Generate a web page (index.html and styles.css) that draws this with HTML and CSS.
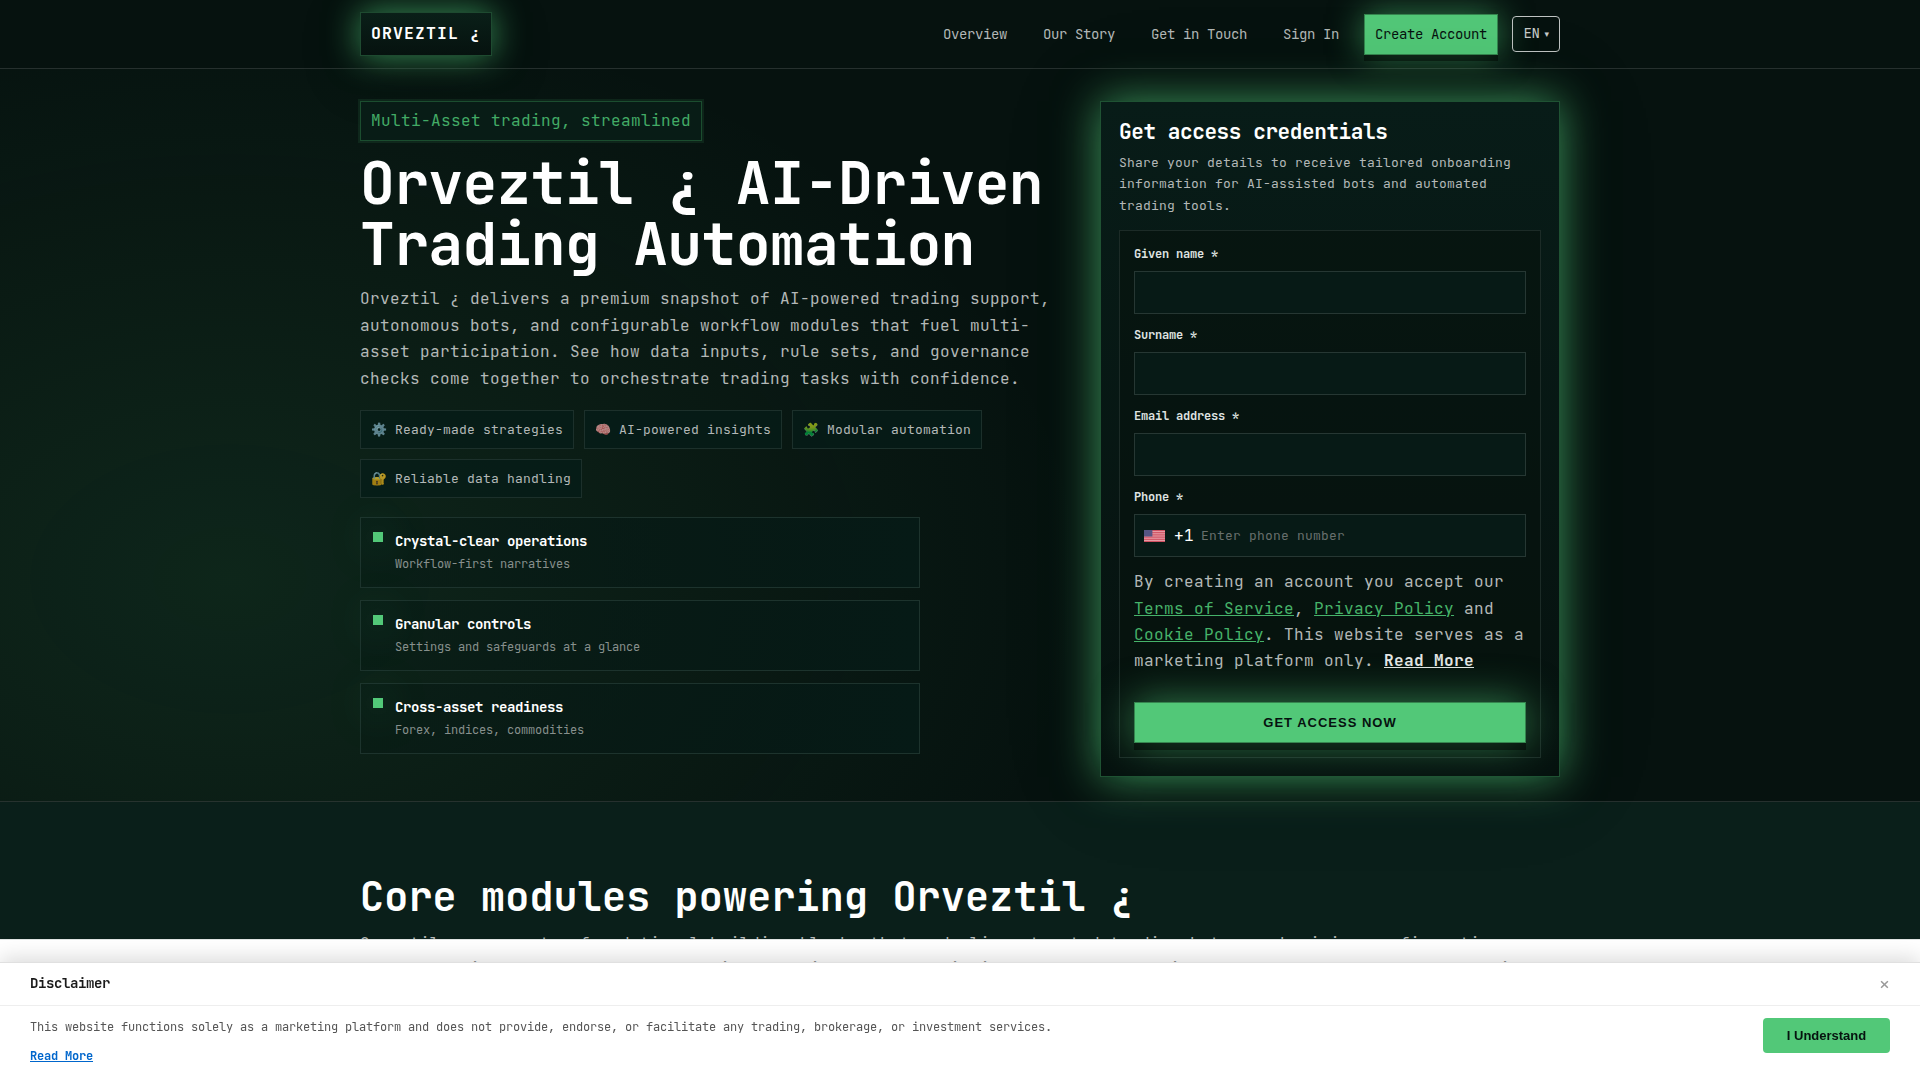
FILE: index.html
```html
<!DOCTYPE html>
<html lang="en">
<head>
    <meta charset="UTF-8">
    <title>Orveztil ¿</title>
    <link rel="stylesheet" href="styles.css">
</head>
<body>
    <header class="header">
        <div class="container header-inner">
            <a class="logo">ORVEZTIL ¿</a>
            <nav class="nav">
                <a>Overview</a>
                <a>Our Story</a>
                <a>Get in Touch</a>
                <a>Sign In</a>
            </nav>
            <a class="btn-create">Create Account</a>
            <div class="lang">EN <span>▾</span></div>
        </div>
    </header>

    <section class="hero">
        <div class="container hero-inner">
            <div class="hero-text">
                <div class="badge">Multi-Asset trading, streamlined</div>
                <h1>Orveztil ¿ AI-Driven<br>Trading Automation</h1>
                <p class="lead">Orveztil ¿ delivers a premium snapshot of AI-powered trading support,<br>autonomous bots, and configurable workflow modules that fuel multi-<br>asset participation. See how data inputs, rule sets, and governance<br>checks come together to orchestrate trading tasks with confidence.</p>
                <ul class="chips">
                    <li><i>⚙️</i>Ready-made strategies</li>
                    <li><i>🧠</i>AI-powered insights</li>
                    <li><i>🧩</i>Modular automation</li>
                    <li><i>🔐</i>Reliable data handling</li>
                </ul>
                <div class="features">
                    <div class="feature">
                        <span class="dot"></span>
                        <div>
                            <strong>Crystal-clear operations</strong>
                            <small>Workflow-first narratives</small>
                        </div>
                    </div>
                    <div class="feature">
                        <span class="dot"></span>
                        <div>
                            <strong>Granular controls</strong>
                            <small>Settings and safeguards at a glance</small>
                        </div>
                    </div>
                    <div class="feature">
                        <span class="dot"></span>
                        <div>
                            <strong>Cross-asset readiness</strong>
                            <small>Forex, indices, commodities</small>
                        </div>
                    </div>
                </div>
            </div>

            <div class="card">
                <h3>Get access credentials</h3>
                <p class="card-sub">Share your details to receive tailored onboarding<br>information for AI-assisted bots and automated<br>trading tools.</p>
                <form class="form">
                    <label>Given name *</label>
                    <div class="field"></div>
                    <label>Surname *</label>
                    <div class="field"></div>
                    <label>Email address *</label>
                    <div class="field"></div>
                    <label>Phone *</label>
                    <div class="field phone">
                        <svg class="flag" width="21" height="12" viewBox="0 0 20 12" preserveAspectRatio="none">
                            <rect width="20" height="12" fill="#e9a3ab"/>
                            <path d="M0 .5h20M0 2.4h20M0 4.2h20M0 6h20M0 7.8h20M0 9.6h20M0 11.5h20" stroke="#cd4a5b" stroke-width=".9"/>
                            <rect width="8" height="6.5" fill="#565583"/>
                        </svg>
                        <span class="code">+1</span>
                        <span class="placeholder">Enter phone number</span>
                    </div>
                    <p class="terms">By creating an account you accept our<br><a>Terms of Service</a>, <a>Privacy Policy</a> and<br><a>Cookie Policy</a>. This website serves as a<br>marketing platform only. <b>Read More</b></p>
                    <button type="button" class="btn-submit">GET ACCESS NOW</button>
                </form>
            </div>
        </div>
    </section>

    <section class="modules">
        <div class="container">
            <h2>Core modules powering Orveztil ¿</h2>
            <p>Orveztil ¿ aggregates foundational building blocks that underlie automated trading bots, emphasizing configuration</p>
        </div>
    </section>

    <div class="bottom">
        <div class="strip">
            <p class="container">controls, risk rules, and the operation of this secured audit in every account trigger across all supported operation.</p>
        </div>
        <div class="disclaimer">
            <div class="disclaimer-head">
                <strong>Disclaimer</strong>
                <span class="close">×</span>
            </div>
            <div class="disclaimer-body">
                <div>
                    <p>This website functions solely as a marketing platform and does not provide, endorse, or facilitate any trading, brokerage, or investment services.</p>
                    <a>Read More</a>
                </div>
                <button type="button">I Understand</button>
            </div>
        </div>
    </div>
</body>
</html>
```

FILE: styles.css
```css
* {
    box-sizing: border-box;
    margin: 0;
    padding: 0;
}
body {
    height: 1080px;
    overflow: hidden;
    background: #06120f;
    color: #b3b8b7;
    font-family: "JetBrains Mono", "DejaVu Sans Mono", "Liberation Mono", monospace;
    font-size: 16px;
    line-height: 1.65;
    letter-spacing: 0.4px;
}
.container {
    width: 1200px;
    margin: 0 auto;
}
.header {
    height: 69px;
    border-bottom: 1px solid rgba(255,255,255,0.13);
}
.header-inner {
    display: flex;
    align-items: center;
    height: 68px;
}
.logo {
    width: 132px;
    height: 44px;
    padding: 0 10px;
    border: 1px solid #1e4a30;
    background: linear-gradient(#0a1f18, #06120f);
    box-shadow: 0 0 34px rgba(80,200,120,0.7), 0 12px 60px rgba(0,0,0,0.25);
    color: #fff;
    font-size: 16.5px;
    font-weight: bold;
    line-height: 41px;
    letter-spacing: 1.1px;
    white-space: nowrap;
}
.nav {
    display: flex;
    gap: 36px;
    margin-left: auto;
    padding-top: 1px;
    font-size: 14px;
    letter-spacing: -0.4px;
}
.btn-create {
    height: 41px;
    margin-left: 25px;
    padding: 0 10px;
    border: 1px solid #36854f;
    background: #52c878;
    box-shadow: 0 6px 0 rgba(0,0,0,0.45), 0 0 34px rgba(80,200,120,0.6);
    color: #06120f;
    font-size: 14px;
    line-height: 39px;
    letter-spacing: -0.4px;
}
.lang {
    display: flex;
    align-items: center;
    justify-content: center;
    gap: 5px;
    width: 48px;
    height: 36px;
    margin-left: 14px;
    border: 1px solid #c0c4c3;
    border-radius: 4px;
    color: #c8cccb;
    font-size: 14px;
    letter-spacing: -0.4px;
}
.lang span {
    font-family: "DejaVu Sans", sans-serif;
    font-size: 9px;
}

/* hero */
.hero {
    height: 733px;
    border-bottom: 1px solid rgba(255,255,255,0.13);
    background: radial-gradient(ellipse 860px 580px at 230px 510px, rgba(80,200,120,0.11), rgba(80,200,120,0) 100%);
}
.hero-inner {
    display: flex;
    justify-content: space-between;
    align-items: flex-start;
    padding-top: 32px;
}
.hero-text {
    width: 700px;
}
.badge {
    width: 342px;
    height: 40px;
    padding: 0 10px;
    border: 1px solid #1b4d2f;
    background: #081c16;
    box-shadow: 0 0 0 2px rgba(80,200,120,0.1);
    color: #43ab66;
    line-height: 38px;
    white-space: nowrap;
}
h1 {
    margin-top: 12px;
    color: #fff;
    font-size: 58px;
    line-height: 61px;
    letter-spacing: -0.65px;
    white-space: nowrap;
}
.lead {
    margin-top: 11px;
    line-height: 26.7px;
    white-space: nowrap;
}
.chips {
    display: flex;
    flex-wrap: wrap;
    gap: 10px;
    width: 690px;
    margin-top: 17px;
    list-style: none;
}
.chips li {
    display: flex;
    align-items: center;
    height: 39px;
    padding: 0 10px;
    border: 1px solid #1c302b;
    background: rgba(6,28,24,0.75);
    font-size: 13px;
    letter-spacing: 0.2px;
}
.chips i {
    width: 24px;
    font-style: normal;
    opacity: 0.7;
}
.features {
    display: flex;
    flex-direction: column;
    gap: 12px;
    width: 560px;
    margin-top: 19px;
}
.feature {
    display: flex;
    gap: 12px;
    height: 71px;
    padding: 12px;
    border: 1px solid #1d332d;
    background: linear-gradient(90deg, rgba(6,24,20,0.35), #061a16);
}
.dot {
    width: 10px;
    height: 10px;
    margin-top: 2px;
    background: #52c878;
    box-shadow: 0 0 40px rgba(80,200,120,0.7);
}
.feature strong {
    display: block;
    color: #fff;
    font-size: 14px;
    line-height: 23px;
    letter-spacing: -0.4px;
}
.feature small {
    display: block;
    color: #87908d;
    font-size: 12px;
    line-height: 23px;
    letter-spacing: -0.2px;
}

/* sign up card */
.card {
    position: relative;
    width: 460px;
    height: 676px;
    padding: 18px;
    border: 1px solid #1f5233;
    background: linear-gradient(#081c18, #06120f);
    box-shadow: 0 0 42px rgba(80,200,120,0.72), 0 0 90px rgba(0,0,0,0.2);
}
.card h3 {
    color: #fff;
    font-size: 21px;
    line-height: 24px;
    letter-spacing: -0.4px;
}
.card-sub {
    margin-top: 8px;
    font-size: 13px;
    line-height: 21.4px;
    letter-spacing: 0.2px;
    white-space: nowrap;
}
.form {
    height: 528px;
    margin-top: 14px;
    padding: 14px;
    border: 1px solid #1c2b27;
    background: rgba(6,18,14,0.6);
}
.form label {
    display: block;
    height: 26px;
    color: #dfe3e1;
    font-size: 12px;
    font-weight: bold;
    line-height: 19px;
    letter-spacing: -0.2px;
}
.field {
    height: 43px;
    margin-bottom: 12px;
    border: 1px solid #263733;
    background: #071a16;
}
.phone {
    display: flex;
    align-items: center;
    padding-left: 9px;
}
.code {
    width: 29px;
    padding-left: 9px;
    color: #fff;
}
.placeholder {
    margin-left: 7px;
    color: #686f6d;
    font-size: 13px;
    letter-spacing: 0.2px;
}
.terms {
    line-height: 26.4px;
    white-space: nowrap;
}
.terms a {
    color: #46b36a;
    text-decoration: underline;
}
.terms b {
    color: #e3e6e5;
    text-decoration: underline;
}
.btn-submit {
    width: 392px;
    height: 41px;
    margin-top: 27px;
    border: 1px solid #36854f;
    background: #52c878;
    box-shadow: 0 7px 0 rgba(0,0,0,0.45), 0 0 40px rgba(80,200,120,0.6);
    color: #06120f;
    font: bold 13px "Liberation Sans", Arial, sans-serif;
    letter-spacing: 1px;
}

.modules {
    height: 278px;
    padding-top: 65px;
    background: #0a1f1a;
}
.modules h2 {
    color: #fff;
    font-size: 40px;
    line-height: 60px;
    letter-spacing: 0.2px;
    white-space: nowrap;
}
.modules p {
    margin-top: 4px;
    white-space: nowrap;
}

/* fixed notice */
.bottom {
    position: fixed;
    left: 0;
    right: 0;
    bottom: 0;
    z-index: 10;
}
.strip {
    height: 23px;
    overflow: hidden;
    border-top: 1px solid #e0e4e3;
    background: #fff;
}
.strip p {
    padding-top: 16px;
    color: #888;
    white-space: nowrap;
}
.disclaimer {
    position: relative;
    height: 118px;
    border-top: 1px solid #e0e0e0;
    background: #fff;
    box-shadow: 0 -4px 20px rgba(0,0,0,0.15);
}
.disclaimer-head {
    display: flex;
    justify-content: space-between;
    align-items: center;
    height: 43px;
    padding: 0 30px;
    border-bottom: 1px solid #eee;
    color: #1a1a1a;
    font-size: 14px;
    letter-spacing: -0.4px;
}
.close {
    color: #999;
    font-size: 20px;
}
.disclaimer-body {
    display: flex;
    justify-content: space-between;
    align-items: flex-start;
    padding: 12px 30px;
    color: #555;
    font-size: 12px;
    letter-spacing: -0.2px;
}
.disclaimer-body p {
    line-height: 19px;
    white-space: nowrap;
}
.disclaimer-body a {
    display: block;
    margin-top: 10px;
    color: #0066cc;
    font-weight: bold;
    text-decoration: underline;
}
.disclaimer-body button {
    width: 127px;
    height: 35px;
    border: 0;
    border-radius: 4px;
    background: #52c878;
    color: #06120f;
    font: bold 13px "Liberation Sans", Arial, sans-serif;
}
```
